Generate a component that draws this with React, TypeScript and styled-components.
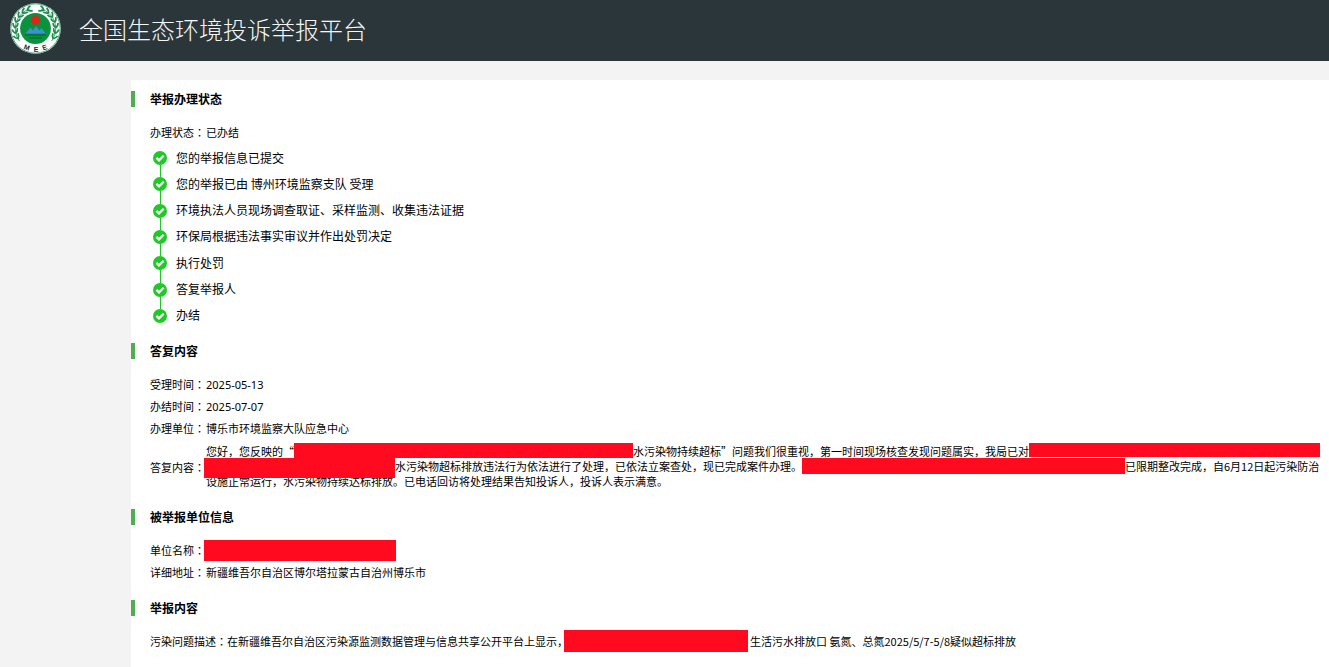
import React from "react";
import styled, { createGlobalStyle } from "styled-components";

const GlobalStyle = createGlobalStyle`
  * { box-sizing: border-box; }
  body {
    margin: 0;
    background: #f3f3f3;
    color: #000;
    font-family: "Noto Sans CJK SC", "Noto Sans", sans-serif;
    font-size: 11px;
  }
  #root { min-height: 100vh; display: flex; }
`;

const Page = styled.div`
  flex: 1;
  min-width: 0;
  display: flex;
  flex-direction: column;
`;

const Header = styled.header`
  display: flex;
  align-items: center;
  gap: 18px;
  height: 61px;
  padding: 0 10px 4px;
  background: #2b363b;
`;

const Title = styled.h1`
  margin: 0;
  color: #f4f6f6;
  font-size: 24px;
  font-weight: 300;
  line-height: 36px;
`;

const Panel = styled.main`
  flex: 1;
  margin: 19px 0 0 131px;
  padding-top: 11px;
  background: #fff;
`;

const Section = styled.section`
  padding-bottom: 16px;
`;

const Heading = styled.h2`
  margin: 0 0 15px;
  padding-left: 15px;
  border-left: 4px solid #4caf50;
  font-size: 12px;
  font-weight: 700;
  line-height: 16px;
`;

const Fields = styled.dl`
  margin: 0;
  padding: 0 9px 0 19px;
`;

const Field = styled.div<{ $tall?: boolean }>`
  display: flex;
  align-items: center;
  min-height: ${(p) => (p.$tall ? 53 : 22)}px;
  padding-bottom: ${(p) => (p.$tall ? 0 : 2)}px;
`;

const LabelCell = styled.dt`
  flex: none;
  width: 56px;
  white-space: nowrap;
`;

const Colon = styled.span`
  font-family: "Noto Sans CJK TC", sans-serif;
`;

const Label = ({ children }: { children: React.ReactNode }) => (
  <LabelCell>
    {children}
    <Colon lang="zh-TW">：</Colon>
  </LabelCell>
);

const Value = styled.dd`
  flex: 1;
  margin: 0;
  line-height: 15px;
`;

const DateValue = styled(Value)`
  font-family: "Noto Sans", "Noto Sans CJK SC", sans-serif;
`;

const Line = styled.div`
  display: flex;
  height: 15px;
  white-space: nowrap;
`;

const Redacted = styled.span<{ $w: number; $h: number; $outdent?: boolean }>`
  flex: 0 0 ${(p) => p.$w}px;
  height: ${(p) => p.$h}px;
  margin-top: -1px;
  margin-left: ${(p) => (p.$outdent ? -2 : 0)}px;
  background: #ff0a1e;
  z-index: 1;
`;

const RedactedValue = styled.dd`
  width: 192px;
  height: 21px;
  margin: 0 0 -1px -2px;
  background: #ff0a1e;
`;

const Description = styled.p`
  display: flex;
  align-items: center;
  margin: 0;
  padding: 0 0 2px 19px;
  height: 22px;
  white-space: pre;
`;

const DescriptionMask = styled.span`
  flex: 0 0 184px;
  height: 22px;
  margin: 0 2px 0 -4px;
  background: #ff0a1e;
`;

const Steps = styled.ol`
  display: grid;
  grid-auto-rows: 1fr;
  height: 184px;
  margin: 1px 0 -2px;
  padding: 0 0 0 22px;
  list-style: none;
  font-size: 12px;
`;

const Step = styled.li`
  display: flex;
  align-items: center;
  gap: 9px;
`;

const StepText = styled.span`
  padding-bottom: 2px;
`;

const Marker = styled.span`
  display: flex;
  align-self: stretch;
  flex-direction: column;
  align-items: center;

  &::before,
  &::after {
    content: "";
    flex: 1;
    width: 1px;
    background: #22c528;
  }
  ${Step}:first-child &::before,
  ${Step}:last-child &::after {
    background: transparent;
  }
`;

const Check = () => (
  <svg width="14" height="14" viewBox="0 0 14 14" aria-hidden="true">
    <circle cx="7" cy="7" r="7" fill="#20c928" />
    <path d="M3.4 6.9 6 9.4l4.7-4.6" fill="none" stroke="#fff" strokeWidth="2.2" />
  </svg>
);

const leaves = [-116, -100, -84, -68, -52, -36, -20, 20, 36, 52, 68, 84, 100, 116];

const Logo = () => (
  <svg width="51" height="51" viewBox="0 0 51 51" role="img" aria-label="MEE">
    <circle cx="25.5" cy="25.5" r="25.3" fill="#fff" />
    <circle cx="25.5" cy="25.5" r="24.7" fill="none" stroke="#3b9a68" strokeWidth="0.9" />
    <g fill="none" stroke="#14904a">
      <path d="M9.5 38A20.3 20.3 0 0 1 20 6M41.5 38A20.3 20.3 0 0 0 31 6" strokeWidth="0.8" />
      {leaves.map((a) => (
        <path
          key={a}
          transform={`rotate(${a} 25.5 25.5)`}
          d={
            a < 0
              ? "M24 5.2Q26 2.6 28.6 2.4M24 5.2Q26.4 7.8 29 7.6"
              : "M27 5.2Q25 2.6 22.4 2.4M27 5.2Q24.6 7.8 22 7.6"
          }
          strokeWidth="1.7"
        />
      ))}
    </g>
    <circle cx="25.5" cy="25.5" r="15.4" fill="#0b923f" />
    <circle cx="25.5" cy="17" r="4.6" fill="#e32219" />
    <path d="m15.5 30.5 5-6 2.5 3 3-4.5 3.5 4.5 2-2.5 4 5.5Z" fill="#3c91d0" />
    <path d="M15 32h21M19 35h13" stroke="#075f35" strokeWidth="1.2" />
    <g fill="#242b2b" fontFamily="Liberation Sans, sans-serif" fontWeight="700" fontSize="7" textAnchor="middle">
      <text x="17" y="47" transform="rotate(20 17 44)">M</text>
      <text x="26" y="49">E</text>
      <text x="34.5" y="47" transform="rotate(-20 34.5 44)">E</text>
    </g>
  </svg>
);

const steps = [
  "您的举报信息已提交",
  "您的举报已由 博州环境监察支队 受理",
  "环境执法人员现场调查取证、采样监测、收集违法证据",
  "环保局根据违法事实审议并作出处罚决定",
  "执行处罚",
  "答复举报人",
  "办结",
];

export default function App() {
  return (
    <>
      <GlobalStyle />
      <Page>
        <Header>
          <Logo />
          <Title>全国生态环境投诉举报平台</Title>
        </Header>
        <Panel>
          <Section>
            <Heading>举报办理状态</Heading>
            <Fields>
              <Field>
                <Label>办理状态</Label>
                <Value>已办结</Value>
              </Field>
            </Fields>
            <Steps>
              {steps.map((text) => (
                <Step key={text}>
                  <Marker>
                    <Check />
                  </Marker>
                  <StepText>{text}</StepText>
                </Step>
              ))}
            </Steps>
          </Section>

          <Section>
            <Heading>答复内容</Heading>
            <Fields>
              <Field>
                <Label>受理时间</Label>
                <DateValue>2025-05-13</DateValue>
              </Field>
              <Field>
                <Label>办结时间</Label>
                <DateValue>2025-07-07</DateValue>
              </Field>
              <Field>
                <Label>办理单位</Label>
                <Value>博乐市环境监察大队应急中心</Value>
              </Field>
              <Field $tall>
                <Label>答复内容</Label>
                <Value>
                  <Line>
                    <span>您好，您反映的“</span>
                    <Redacted $w={339} $h={15} />
                    <span>水污染物持续超标”问题我们很重视，第一时间现场核查发现问题属实，我局已对</span>
                    <Redacted $w={291} $h={14} />
                  </Line>
                  <Line>
                    <Redacted $w={191} $h={20} $outdent />
                    <span>水污染物超标排放违法行为依法进行了处理，已依法立案查处，现已完成案件办理。</span>
                    <Redacted $w={323} $h={16} />
                    <span>已限期整改完成，自6月12日起污染防治</span>
                  </Line>
                  <Line>设施正常运行，水污染物持续达标排放。已电话回访将处理结果告知投诉人，投诉人表示满意。</Line>
                </Value>
              </Field>
            </Fields>
          </Section>

          <Section>
            <Heading>被举报单位信息</Heading>
            <Fields>
              <Field>
                <Label>单位名称</Label>
                <RedactedValue aria-label="已遮盖" />
              </Field>
              <Field>
                <Label>详细地址</Label>
                <Value>新疆维吾尔自治区博尔塔拉蒙古自治州博乐市</Value>
              </Field>
            </Fields>
          </Section>

          <Section>
            <Heading>举报内容</Heading>
            <Description>
              <span>
                污染问题描述<Colon lang="zh-TW">：</Colon>在新疆维吾尔自治区污染源监测数据管理与信息共享公开平台上显示，
              </span>
              <DescriptionMask />
              <span>生活污水排放口 氨氮、总氮2025/5/7-5/8疑似超标排放</span>
            </Description>
          </Section>
        </Panel>
      </Page>
    </>
  );
}
